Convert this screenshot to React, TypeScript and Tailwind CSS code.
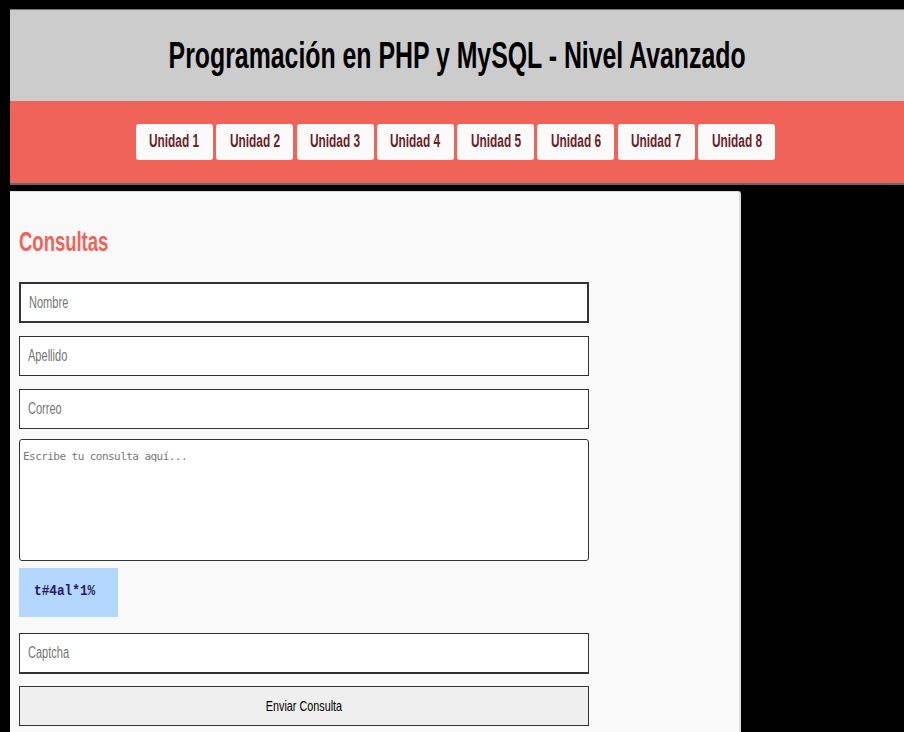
import { useState } from "react";

const units = ["Unidad 1", "Unidad 2", "Unidad 3", "Unidad 4", "Unidad 5", "Unidad 6", "Unidad 7", "Unidad 8"];

// the capture is squeezed horizontally, so text is narrowed with scale-x
function Field({
  value,
  onChange,
  label,
  className,
}: {
  value: string;
  onChange: (v: string) => void;
  label: string;
  className: string;
}) {
  return (
    <div className={`relative ${className}`}>
      <input
        value={value}
        onChange={(e) => onChange(e.target.value)}
        aria-label={label}
        className="h-full w-full bg-white px-[8px] text-[16px] outline-none"
      />
      {!value && (
        <span className="pointer-events-none absolute left-[8px] top-1/2 origin-left -translate-y-1/2 scale-x-[0.69] text-[16px] text-[#757575]">
          {label}
        </span>
      )}
    </div>
  );
}

export default function App() {
  const [nombre, setNombre] = useState("");
  const [apellido, setApellido] = useState("");
  const [correo, setCorreo] = useState("");
  const [consulta, setConsulta] = useState("");
  const [captcha, setCaptcha] = useState("");

  return (
    <div className="min-h-screen bg-black pl-[10px] pt-[9px] font-['Liberation_Sans',Arial,sans-serif]">
      <header className="flex h-[92px] items-center justify-center border-t border-[#777] bg-[#cccccc]">
        <h1 className="scale-x-[0.69] whitespace-nowrap text-[36px] font-bold text-black">
          Programación en PHP y MySQL - Nivel Avanzado
        </h1>
      </header>

      <nav className="flex h-[84px] items-center justify-center gap-[3.3px] border-b-2 border-[#666] bg-[#f06358] pb-px pr-[3px]">
        {units.map((u) => (
          <button key={u} className="flex h-[36px] w-[77px] items-center justify-center rounded-[3px] bg-[#fafafa]">
            <span className="scale-x-[0.66] whitespace-nowrap text-[18px] font-bold text-[#6b1f2a]">{u}</span>
          </button>
        ))}
      </nav>

      <main className="mt-[6px] w-[731px] rounded-tr-[3px] border-r-2 border-t border-[#dddddd] bg-[#f9f9f9] px-[9px] pb-4 pt-[29px]">
        <h2 className="origin-left scale-x-[0.66] text-[28px] font-bold leading-[42px] text-[#f06358]">Consultas</h2>

        <div className="mt-[19px] flex w-[570px] flex-col">
          <Field value={nombre} onChange={setNombre} label="Nombre" className="h-[41px] border-2 border-[#333]" />
          <Field value={apellido} onChange={setApellido} label="Apellido" className="mt-[13px] h-[40px] border border-[#333]" />
          <Field value={correo} onChange={setCorreo} label="Correo" className="mt-[13px] h-[40px] border border-[#333]" />
          <textarea
            value={consulta}
            onChange={(e) => setConsulta(e.target.value)}
            placeholder="Escribe tu consulta aquí..."
            className="mt-[10px] h-[122px] resize-none rounded-[3px] border border-[#333] bg-white px-[3px] py-[9px] font-['DejaVu_Sans_Mono',monospace] text-[11px] tracking-[-0.55px] outline-none placeholder:text-[#777]"
          />

          <div className="mt-[7px] flex h-[49px] w-[99px] items-center bg-[#b3d7ff] pl-[15px]">
            <span className="origin-left scale-x-[0.85] whitespace-nowrap font-['Liberation_Mono',monospace] text-[15px] font-bold text-[#2a1670]">
              t#4al*1%
            </span>
          </div>

          <Field value={captcha} onChange={setCaptcha} label="Captcha" className="mt-[16px] h-[41px] border border-b-2 border-[#333]" />
          <button className="mt-[12px] flex h-[40px] items-center justify-center border border-[#333] bg-[#efefef]">
            <span className="scale-x-[0.72] whitespace-nowrap text-[15px] text-black">Enviar Consulta</span>
          </button>
        </div>
      </main>
    </div>
  );
}
